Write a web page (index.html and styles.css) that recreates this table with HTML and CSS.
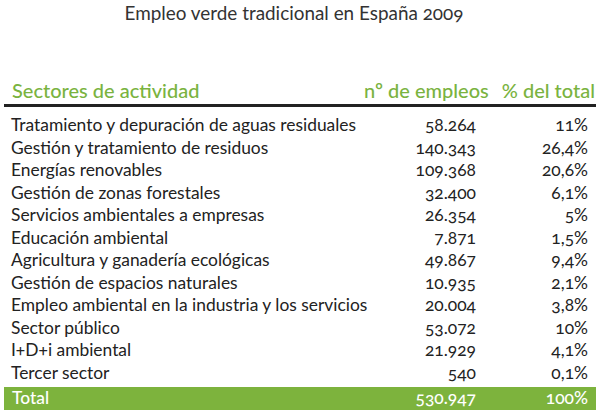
FILE: index.html
```html
<!DOCTYPE html>
<html lang="es">
<head>
<meta charset="utf-8">
<title>Empleo verde tradicional en España 2009</title>
<link rel="stylesheet" href="styles.css">
</head>
<body>
<div class="page">
  <h1 class="title">Empleo verde tradicional en España 2009</h1>
  <div class="table">
    <div class="row head">
      <div class="c1">Sectores de actividad</div>
      <div class="c2">nº de empleos</div>
      <div class="c3">% del total</div>
    </div>
    <div class="rule"></div>
    <div class="body">
      <div class="row"><div class="c1">Tratamiento y depuración de aguas residuales</div><div class="c2">58.264</div><div class="c3">11%</div></div>
      <div class="row"><div class="c1">Gestión y tratamiento de residuos</div><div class="c2">140.343</div><div class="c3">26,4%</div></div>
      <div class="row"><div class="c1">Energías renovables</div><div class="c2">109.368</div><div class="c3">20,6%</div></div>
      <div class="row"><div class="c1">Gestión de zonas forestales</div><div class="c2">32.400</div><div class="c3">6,1%</div></div>
      <div class="row"><div class="c1">Servicios ambientales a empresas</div><div class="c2">26.354</div><div class="c3">5%</div></div>
      <div class="row"><div class="c1">Educación ambiental</div><div class="c2">7.871</div><div class="c3">1,5%</div></div>
      <div class="row"><div class="c1">Agricultura y ganadería ecológicas</div><div class="c2">49.867</div><div class="c3">9,4%</div></div>
      <div class="row"><div class="c1">Gestión de espacios naturales</div><div class="c2">10.935</div><div class="c3">2,1%</div></div>
      <div class="row"><div class="c1">Empleo ambiental en la industria y los servicios</div><div class="c2">20.004</div><div class="c3">3,8%</div></div>
      <div class="row"><div class="c1">Sector público</div><div class="c2">53.072</div><div class="c3">10%</div></div>
      <div class="row"><div class="c1">I+D+i ambiental</div><div class="c2">21.929</div><div class="c3">4,1%</div></div>
      <div class="row"><div class="c1">Tercer sector</div><div class="c2">540</div><div class="c3">0,1%</div></div>
    </div>
    <div class="row total">
      <div class="c1">Total</div>
      <div class="c2">530.947</div>
      <div class="c3">100%</div>
    </div>
  </div>
</div>
</body>
</html>
```
FILE: styles.css
```css
html, body {
  margin: 0;
  padding: 0;
  background: #ffffff;
}
.page {
  width: 600px;
  height: 418px;
  font-family: Lato, "Noto Sans", sans-serif;
  font-variant-numeric: oldstyle-nums;
  color: #222222;
  padding-top: 1.5px;
  box-sizing: border-box;
}
.title {
  margin: 0;
  font-size: 18.9px;
  line-height: 22px;
  font-weight: 400;
  color: #333333;
  text-align: center;
  padding-right: 12px;
}
.table {
  margin: 55.5px 4px 0 4px;
  display: flex;
  flex-direction: column;
}
.row {
  display: grid;
  grid-template-columns: minmax(0, 1fr) 120px 112px;
  font-size: 17.4px;
  line-height: 22.5px;
}
.c1 {
  padding-left: 7px;
  white-space: nowrap;
}
.c2, .c3 {
  text-align: right;
  padding-right: 8px;
  white-space: nowrap;
}
.head {
  color: #7ab33f;
  font-weight: 500;
  font-size: 20px;
  line-height: 22px;
}
.head .c1 { padding-left: 8px; }
.head .c2 { padding-right: 0; }
.head .c3 { padding-right: 1px; }
.rule {
  height: 3px;
  background: #222222;
  margin-top: 3px;
}
.body {
  padding-top: 7px;
}
.total {
  margin-top: 3px;
  height: 23px;
  line-height: 22px;
  background: #7db33d;
  color: #ffffff;
  font-weight: 500;
}
.total .c1 { padding-left: 8px; }
```
